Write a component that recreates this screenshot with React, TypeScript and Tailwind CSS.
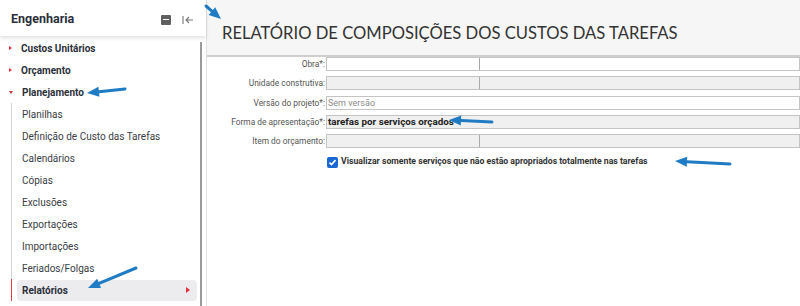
const topItems = [
  { label: 'Custos Unitários', open: false },
  { label: 'Orçamento', open: false },
  { label: 'Planejamento', open: true },
];

const subItems = [
  'Planilhas',
  'Definição de Custo das Tarefas',
  'Calendários',
  'Cópias',
  'Exclusões',
  'Exportações',
  'Importações',
  'Feriados/Folgas',
];

const fields = [
  { label: 'Obra*:', value: '', split: true, tone: 'white' },
  { label: 'Unidade construtiva:', value: '', split: true, tone: 'gray' },
  { label: 'Versão do projeto*:', value: 'Sem versão', split: false, tone: 'white', muted: true },
  { label: 'Forma de apresentação*:', value: 'tarefas por serviços orçados', split: false, tone: 'gray' },
  { label: 'Item do orçamento:', value: '', split: true, tone: 'gray' },
];

function Arrow({ x1, y1, x2, y2 }: { x1: number; y1: number; x2: number; y2: number }) {
  // annotation arrow, head at (x2, y2)
  const a = Math.atan2(y2 - y1, x2 - x1);
  const len = 12;
  const w = 5;
  const bx = x2 - Math.cos(a) * len;
  const by = y2 - Math.sin(a) * len;
  const px = -Math.sin(a) * w;
  const py = Math.cos(a) * w;
  return (
    <g>
      <line x1={x1} y1={y1} x2={bx} y2={by} stroke="#1f7bc4" strokeWidth={3} strokeLinecap="round" />
      <polygon points={`${x2},${y2} ${bx + px},${by + py} ${bx - px},${by - py}`} fill="#1f7bc4" />
    </g>
  );
}

function Sidebar() {
  return (
    <aside className="relative flex h-full w-[207px] shrink-0 flex-col border-r border-[#e2e2e2] bg-white font-['Roboto',sans-serif]">
      <div className="z-10 flex h-[36px] items-center justify-between pl-[11px] pr-[12px] pt-[3px] shadow-[0_2px_4px_rgba(0,0,0,0.12)]">
        <span className="text-[12.5px] font-bold text-[#2b2f3a]">Engenharia</span>
        <div className="flex items-center gap-[11px]">
          <span className="flex h-[10px] w-[10px] items-center justify-center rounded-[1px] bg-[#5f5f5f]">
            <span className="h-[1.5px] w-[6px] bg-white" />
          </span>
          <svg width="12" height="10" viewBox="0 0 12 10" fill="none" stroke="#777" strokeWidth="1.1">
            <path d="M1 1v8M11 5H4M7 2L4 5l3 3" />
          </svg>
        </div>
      </div>
      <div className="flex min-h-0 flex-1">
        <div className="flex flex-1 flex-col pt-[1px]">
          {topItems.map((t) => (
            <div key={t.label} className="flex h-[22px] items-center gap-[9px] pl-[9px]">
              {t.open ? (
                <span className="h-0 w-0 border-x-[2.5px] border-t-[3px] border-x-transparent border-t-[#e0303a]" />
              ) : (
                <span className="h-0 w-0 border-y-[2.5px] border-l-[3px] border-y-transparent border-l-[#e0303a]" />
              )}
              <span className="text-[10px] font-bold text-[#2b2f3a]">{t.label}</span>
            </div>
          ))}
          <div className="ml-[11px] flex flex-col border-l border-[#d4d4d4]">
            {subItems.map((s) => (
              <div key={s} className="flex h-[22px] items-center pl-[10px] text-[10px] text-[#3a3d45]">
                {s}
              </div>
            ))}
            <div className="relative -ml-px flex h-[22px] items-center border-l border-[#e23b45] pl-[5px]">
              <div className="flex h-[21px] flex-1 items-center justify-between rounded-[4px] bg-[#ececee] pl-[5px] pr-[7px]">
                <span className="text-[10px] font-bold text-[#2b2f3a]">Relatórios</span>
                <span className="h-0 w-0 border-y-[3.5px] border-l-[4px] border-y-transparent border-l-[#e0303a]" />
              </div>
            </div>
          </div>
        </div>
        <div className="ml-[3px] mr-[4px] mt-[6px] w-[2px] bg-[#9a9a9a]" />
      </div>
    </aside>
  );
}

function Field({ f }: { f: (typeof fields)[number] }) {
  const bg = f.tone === 'white' ? 'bg-white' : 'bg-[#f0f0f0]';
  return (
    <div className="flex h-[19.3px] items-start">
      <label className="w-[119px] shrink-0 pr-[1px] text-right text-[8.4px] leading-[14px] text-[#555]">{f.label}</label>
      <div className={`flex h-[14px] flex-1 border border-[#c4c4c4] ${bg}`}>
        {f.split ? (
          <>
            <div className="w-[153px] border-r border-[#a9a9a9]" />
            <div className="flex-1" />
          </>
        ) : (
          <span
            className={`pl-[1px] leading-[12px] ${f.muted ? 'text-[9px] text-[#8a8a8a]' : 'text-[9.8px] font-bold text-[#222]'}`}
          >
            {f.value}
          </span>
        )}
      </div>
    </div>
  );
}

export default function App() {
  return (
    <div className="relative flex h-[306px] w-[800px] overflow-hidden bg-white">
      <Sidebar />
      <main className="flex flex-1 flex-col">
        <header className="flex h-[57px] shrink-0 items-center border-b-2 border-[#cfcfcf] bg-[#f6f6f6] pl-[15px] pt-[11px]">
          <h1 className="font-['Lato',sans-serif] text-[16.6px] font-normal text-[#333]">
            RELATÓRIO DE COMPOSIÇÕES DOS CUSTOS DAS TAREFAS
          </h1>
        </header>
        <section className="flex flex-col font-['Roboto',sans-serif]">
          {fields.map((f) => (
            <Field key={f.label} f={f} />
          ))}
          <div className="ml-[120px] mt-[2px] flex items-center gap-[3px]">
            <span className="flex h-[11px] w-[11px] items-center justify-center rounded-[2px] bg-[#1967d2]">
              <svg width="9" height="9" viewBox="0 0 9 9" fill="none" stroke="white" strokeWidth="1.6">
                <path d="M1.5 4.6l2 2 4-4.5" />
              </svg>
            </span>
            <span className="text-[8.7px] font-bold text-[#333]">
              Visualizar somente serviços que não estão apropriados totalmente nas tarefas
            </span>
          </div>
        </section>
      </main>
      <svg className="pointer-events-none absolute left-0 top-0" width="800" height="306">
        <Arrow x1={206} y1={6} x2={221} y2={19} />
        <Arrow x1={125} y1={89} x2={87} y2={93} />
        <Arrow x1={492} y1={122} x2={449} y2={120} />
        <Arrow x1={730} y1={164} x2={675} y2={161} />
        <Arrow x1={136} y1={268} x2={88} y2={288} />
      </svg>
    </div>
  );
}
